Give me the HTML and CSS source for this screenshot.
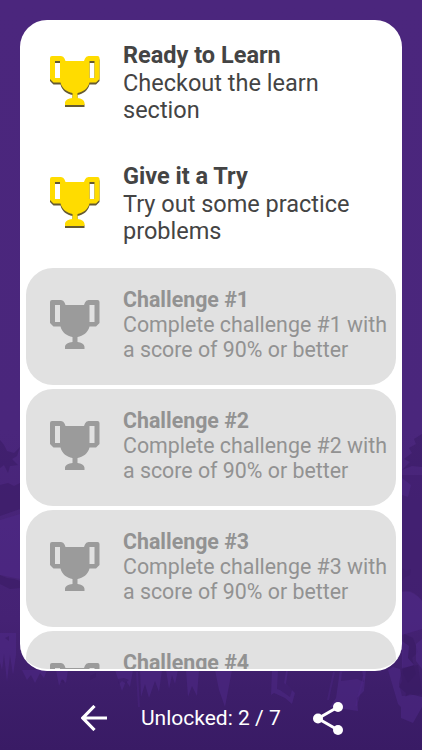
FILE: index.html
```
<!DOCTYPE html>
<html lang="en">
<head>
<meta charset="utf-8">
<title>Achievements</title>
<link rel="stylesheet" href="styles.css">
</head>
<body>
<svg class="defs" width="0" height="0" aria-hidden="true">
  <symbol id="cup" viewBox="0 0 50 50">
    <path fill-rule="evenodd" d="M2 0H11Q13.500 0 14.500 2.500L15.500 5H34L35 2.500Q36 0 38.500 0H47.500Q49.500 0 49.500 2V23L46 26.500H39.500C38 32.500 33 36 27.500 37V42C31 42.500 34.500 44 34.500 47V49H15V47C15 44 18.500 42.500 22.500 42V37C17 36 12 32.500 10.500 26.500H3.500L0 23V2Q0 0 2 0ZM5 5V22H10V5ZM39.500 5V22H44.500V5Z"/>
  </symbol>
</svg>
<svg class="scene" viewBox="0 420 422 330" aria-hidden="true">
  <path class="shade" d="M0 485l8-2 6 3 6-3v26L0 516zM0 575l7 3 7 1 6 2v7l-10 1-10-5zM402 568l4 3 5-2-1 6-5 2-3 4z"/>
  <path class="shade" d="M422 434l-8 5 2 5-7 4 3 5-8 6 6 3-8 8 10-4 10 1z"/>
  <path class="dark" d="M402 475h20v125q-10-12-20-9z"/>
  <path class="glow" d="M402 478l9 7-3 12-6-2zM402 592q11-3 20 9v28l-20 6zM0 520l20-6v65L0 575z"/>
  <path class="shade" d="M0 440l4 5 3 6 7 2 6-6-3 9-5 3 6 6-8 1-2 7-4-8-4 3z"/>
  <path class="glow" d="M0 633h16v22l-3 20-3-20-3 27-3-28-2 16-2-8zM22 670h25l-3 8-4-5-5 10-4-8-4 5zM56 670h12l-2 13-4-4-3 7zM115 670h18l-3 17-4-6-4 10zM140 670h22l-3 22-4-11-6 17-4-14-4 13zM166 670h12l-3 14-3-9-3 14zM186 670h13l-2 26-5-10-4 11zM215 670h17l-7 37-6-17zM272 670h16l-2 14 9 9-3 11-7-6-11-5-3 2zM340 670h26l-2 21-7 7 1 13-28-4 6-9z"/>
  <path class="shade" d="M90 676l6-3v4l-6 3zM60 681l4-1v3zM118 679l6-1 5 2-4 3-3-2-3 3zM278 671h8l-2 12 8 7-2 7-10-7-3-1zM342 672l20-2 2 12-7-3-16 2zM404 634l9 4 5 14-6 6 4 16-8 9-5-9zM5 638l4-2v5z"/>
  <path class="glow" d="M388 670l5-3 7 2 2 12-3 6 7 6-3 16-5-5zM401 699l9-5 12 3v10l-9 16-12-5zM402 641l7 5-1 12 6 7-12 4zM416 644l6-5v30l-6-8z"/>
  <path class="shade" d="M402 668l16-3 4 29-20 2-3-12z"/>
  <path class="streak" d="M137 672l2 35M364 676l-8 30M334 672l-6 28"/>
</svg>
<main class="screen">
  <section class="card">
    <article class="row">
      <svg class="trophy gold"><use href="#cup"/></svg>
      <div class="text"><h2>Ready to Learn</h2><p>Checkout the learn<br>section</p></div>
    </article>
    <article class="row">
      <svg class="trophy gold"><use href="#cup"/></svg>
      <div class="text"><h2>Give it a Try</h2><p>Try out some practice<br>problems</p></div>
    </article>
    <article class="row locked">
      <svg class="trophy"><use href="#cup"/></svg>
      <div class="text"><h2>Challenge #1</h2><p>Complete challenge #1 with<br>a score of 90% or better</p></div>
    </article>
    <article class="row locked">
      <svg class="trophy"><use href="#cup"/></svg>
      <div class="text"><h2>Challenge #2</h2><p>Complete challenge #2 with<br>a score of 90% or better</p></div>
    </article>
    <article class="row locked">
      <svg class="trophy"><use href="#cup"/></svg>
      <div class="text"><h2>Challenge #3</h2><p>Complete challenge #3 with<br>a score of 90% or better</p></div>
    </article>
    <article class="row locked">
      <svg class="trophy"><use href="#cup"/></svg>
      <div class="text"><h2>Challenge #4</h2></div>
    </article>
  </section>
  <footer class="bar">
    <svg class="back" viewBox="0 0 26 26"><path d="M26 13H2M13.500 1L1.800 13l11.700 12"/></svg>
    <span class="count">Unlocked: 2 / 7</span>
    <svg class="share" viewBox="0 0 30 33"><path d="M25 5L5 16.500L25 28"/><circle cx="25" cy="5" r="5"/><circle cx="5" cy="16.500" r="5"/><circle cx="25" cy="28" r="5"/></svg>
  </footer>
</main>
</body>
</html>
```
FILE: styles.css
```
* { box-sizing: border-box; }
body {
  margin: 0;
  height: 750px;
  overflow: hidden;
  font-family: Roboto, sans-serif;
  background: linear-gradient(#4b267d 0, #4a267c 430px, #452274 620px, #3d1e6a 690px, #391b65 750px);
}
.defs { position: absolute; }
.scene { position: absolute; left: 0; top: 420px; width: 422px; height: 330px; }
.shade { fill: #371962; opacity: .5; }
.dark { fill: #3f1e6d; opacity: .6; }
.glow { fill: #50298a; opacity: .5; }
.streak { fill: none; stroke: #50298a; stroke-width: 2; opacity: .35; }
.screen {
  position: relative;
  height: 750px;
  padding: 20px 20px 0;
  display: flex;
  flex-direction: column;
}
.card {
  height: 651px;
  flex: none;
  padding: 6px 6px 0;
  overflow: hidden;
  background: #fff;
  border-radius: 27px;
  border-bottom: 2px solid #fff;
  display: flex;
  flex-direction: column;
  gap: 4.400px;
}
.row {
  flex: none;
  height: 116.600px;
  border-radius: 27px;
  padding-left: 23.500px;
  display: flex;
  align-items: center;
  color: #444;
  font-size: 23.500px;
  line-height: 27.400px;
}
.locked {
  background: #e1e1e1;
  color: #929292;
  font-size: 21.350px;
  line-height: 25.100px;
}
.trophy {
  width: 50px;
  height: 50px;
  margin-right: 23.500px;
  margin-top: -3px;
  flex: none;
  overflow: visible;
  fill: #9b9b9b;
}
.gold { margin-top: -6px; fill: #ffdc00; filter: drop-shadow(0 2px .3px #655a32); }
.text { white-space: nowrap; margin-top: -2px; }
.locked .text { margin-top: -4px; }
h2, p { margin: 0; font-size: inherit; }
h2 { font-weight: 700; }
.row:last-child { align-items: flex-start; }
.row:last-child .trophy { margin-top: 32px; }
.row:last-child .text { margin-top: 19px; }
.bar {
  height: 79px;
  padding: 16px 59px 1px 61px;
  display: flex;
  align-items: center;
  color: #fff;
}
.bar svg { flex: none; stroke: #fff; }
.back { width: 26px; height: 26px; fill: none; stroke-width: 3.200; }
.share { width: 30px; height: 33px; stroke-width: 3; margin-left: auto; }
.share path { fill: none; }
.share circle { fill: #fff; stroke: none; }
.count { margin-left: 34px; font-size: 21px; white-space: nowrap; }
```
